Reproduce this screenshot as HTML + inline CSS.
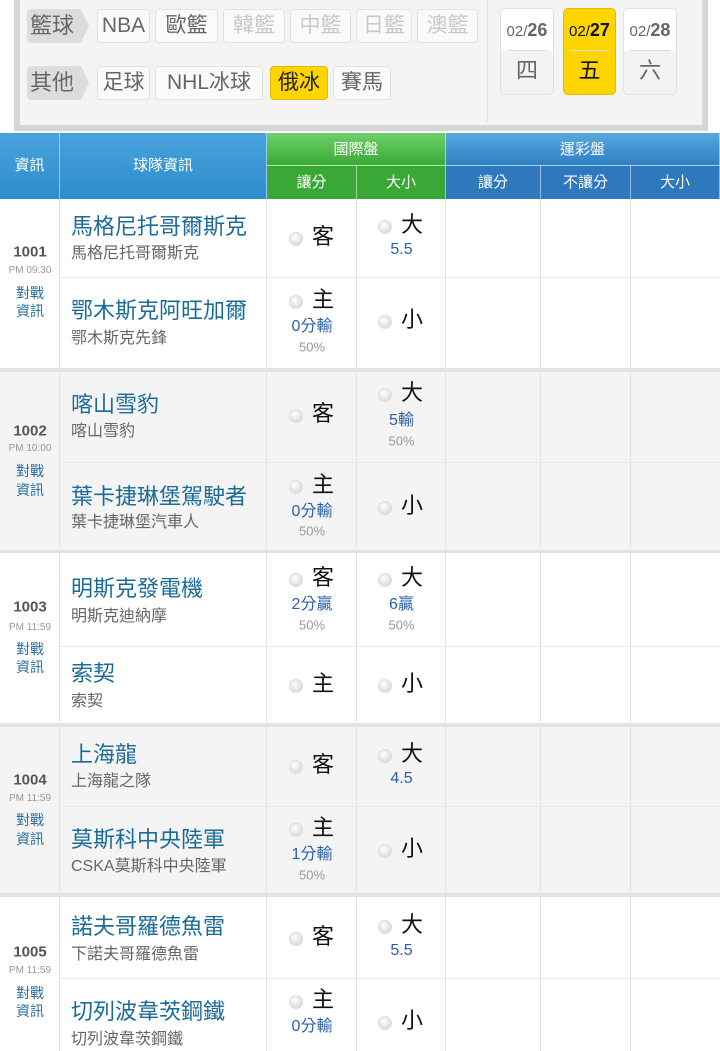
<!DOCTYPE html>
<html><head><meta charset="utf-8"><style>
*{margin:0;padding:0;box-sizing:border-box}
body{width:720px;height:1051px;overflow:hidden;background:#fff;font-family:"Liberation Sans","Noto Sans CJK TC",sans-serif;position:relative}
.abs{position:absolute}
.a{position:absolute;transform:translateY(-50%);line-height:1;white-space:nowrap}
.btn{position:absolute;height:34px;border:1px solid #e2e2e2;border-radius:4px;background:#fafafa;font-size:21px;line-height:32px;text-align:center;color:#666}
.dis{color:#c8c8c8}
.lab{position:absolute;height:34px;background:#dcdcdc;font-size:22px;line-height:34px;color:#666;padding-left:3px;border-radius:4px 0 0 4px}
.lab:after{content:"";position:absolute;right:-8px;top:0;border-left:8px solid #dcdcdc;border-top:17px solid transparent;border-bottom:17px solid transparent}
.date{position:absolute;top:8px;height:87px;border:1px solid #e0e0e0;border-radius:5px;background:#f3f3f3;text-align:center;color:#666;overflow:hidden}
.date .d{font-size:15px;height:42px;line-height:42px;background:#fff;position:relative}
.date .d:after{content:"";position:absolute;left:6px;right:6px;bottom:0;height:1px;background:#ddd}
.date .d b{font-size:18px}
.date .w{font-size:22px;line-height:40px}
.hc{position:absolute;color:#fff;font-size:15px;text-align:center;border-right:1px solid rgba(255,255,255,.5)}
.name{font-size:22px;color:#1b6b99}
.sub{font-size:16px;color:#666}
.r{position:absolute;width:14px;height:14px;border-radius:50%;border:1px solid #ddd;background:radial-gradient(circle at 40% 35%,#fff,#ddd 70%,#ccc);transform:translateY(-50%)}
.o{font-size:22px;color:#111}
.h{font-size:16px;color:#2a5fa8;text-align:center}
.p{font-size:13px;color:#999;text-align:center}
.id{font-size:15px;font-weight:bold;color:#555;width:60px;text-align:center}
.tm{font-size:10px;color:#999;width:60px;text-align:center}
.vs{font-size:14px;color:#2a6fa3;width:60px;text-align:center}
.vl{position:absolute;width:1px;background:#e4e4e4}
.hl{position:absolute;height:1px;background:#eaeaea;left:60px;right:0}
.sep{position:absolute;left:0;right:0;height:4px;background:#e2e2e2}
</style></head><body>
<div class="abs" style="left:14px;top:0;width:694px;height:131px;background:#d6d6d6"></div>
<div class="abs" style="left:20px;top:0;width:682px;height:125px;background:#f4f4f4"></div>
<div class="abs" style="left:487px;top:0;width:1px;height:122px;background:#e0e0e0"></div>
<div class="lab" style="left:27px;top:9px;width:54px">籃球</div>
<div class="btn" style="left:97px;top:9px;width:53px">NBA</div>
<div class="btn" style="left:155px;top:9px;width:63px">歐籃</div>
<div class="btn dis" style="left:223px;top:9px;width:62px">韓籃</div>
<div class="btn dis" style="left:290px;top:9px;width:61px">中籃</div>
<div class="btn dis" style="left:356px;top:9px;width:56px">日籃</div>
<div class="btn dis" style="left:417px;top:9px;width:61px">澳籃</div>
<div class="lab" style="left:27px;top:66px;width:54px">其他</div>
<div class="btn" style="left:97px;top:66px;width:53px">足球</div>
<div class="btn" style="left:155px;top:66px;width:108px">NHL冰球</div>
<div class="btn" style="left:270px;top:66px;width:58px;background:#ffd500;border-color:#e6b800;color:#222">俄冰</div>
<div class="btn" style="left:333px;top:66px;width:58px">賽馬</div>
<div class="date" style="left:500px;width:54px"><div class="d">02/<b>26</b></div><div class="w">四</div></div>
<div class="date" style="left:563px;width:53px;background:#ffd500;border-color:#e6b800;color:#111"><div class="d" style="background:#ffd500">02/<b>27</b></div><div class="w">五</div></div>
<div class="date" style="left:623px;width:54px"><div class="d">02/<b>28</b></div><div class="w">六</div></div>
<div class="abs" style="left:0;top:133px;width:720px;height:66px;background:linear-gradient(#47a3dc,#2f8ccc)"></div>
<div class="hc" style="left:0;top:133px;width:60px;height:66px;line-height:66px">資訊</div>
<div class="hc" style="left:60px;top:133px;width:207px;height:66px;line-height:66px">球隊資訊</div>
<div class="hc" style="left:267px;top:133px;width:179px;height:33px;line-height:33px;background:linear-gradient(#6fd06a,#3aaa36);border-bottom:1px solid rgba(255,255,255,.5)">國際盤</div>
<div class="hc" style="left:267px;top:166px;width:90px;height:33px;line-height:33px;background:#3aa836">讓分</div>
<div class="hc" style="left:357px;top:166px;width:89px;height:33px;line-height:33px;background:#3aa836">大小</div>
<div class="hc" style="left:446px;top:133px;width:274px;height:33px;line-height:33px;background:linear-gradient(#58a8e0,#2f7fc4);border-bottom:1px solid rgba(255,255,255,.5)">運彩盤</div>
<div class="hc" style="left:446px;top:166px;width:95px;height:33px;line-height:33px;background:#2f78be">讓分</div>
<div class="hc" style="left:541px;top:166px;width:90px;height:33px;line-height:33px;background:#2f78be">不讓分</div>
<div class="hc" style="left:631px;top:166px;width:89px;height:33px;line-height:33px;background:#2f78be">大小</div>
<div class="abs" style="left:0;top:372px;width:720px;height:178px;background:#f4f4f4"></div>
<div class="abs" style="left:0;top:727px;width:720px;height:166px;background:#f4f4f4"></div>
<div class="sep" style="top:368px"></div>
<div class="sep" style="top:550px;height:3px"></div>
<div class="sep" style="top:723px"></div>
<div class="sep" style="top:893px"></div>
<div class="hl" style="top:277px"></div>
<div class="hl" style="top:462px"></div>
<div class="hl" style="top:646px"></div>
<div class="hl" style="top:806px"></div>
<div class="hl" style="top:978px"></div>
<div class="vl" style="left:59px;top:199px;height:852px"></div>
<div class="vl" style="left:266px;top:199px;height:852px"></div>
<div class="vl" style="left:356px;top:199px;height:852px"></div>
<div class="vl" style="left:445px;top:199px;height:852px"></div>
<div class="vl" style="left:540px;top:199px;height:852px"></div>
<div class="vl" style="left:630px;top:199px;height:852px"></div>

<div class="a id" style="left:0;top:252px">1001</div><div class="a tm" style="left:0;top:271px">PM 09:30</div>
<div class="a vs" style="left:0;top:293px">對戰</div><div class="a vs" style="left:0;top:311px">資訊</div>
<div class="a name" style="left:71px;top:227px">馬格尼托哥爾斯克</div><div class="a sub" style="left:71px;top:254px">馬格尼托哥爾斯克</div>
<div class="r" style="left:289px;top:239px"></div><div class="a o" style="left:312px;top:237px">客</div>
<div class="r" style="left:378px;top:227px"></div><div class="a o" style="left:401px;top:225px">大</div><div class="a h" style="left:357px;width:89px;top:250px">5.5</div>
<div class="a name" style="left:71px;top:311px">鄂木斯克阿旺加爾</div><div class="a sub" style="left:71px;top:339px">鄂木斯克先鋒</div>
<div class="r" style="left:289px;top:302px"></div><div class="a o" style="left:312px;top:300px">主</div><div class="a h" style="left:267px;width:90px;top:327px">0分輸</div><div class="a p" style="left:267px;width:90px;top:347px">50%</div>
<div class="r" style="left:378px;top:322px"></div><div class="a o" style="left:401px;top:320px">小</div>

<div class="a id" style="left:0;top:431px">1002</div><div class="a tm" style="left:0;top:449px">PM 10:00</div>
<div class="a vs" style="left:0;top:471px">對戰</div><div class="a vs" style="left:0;top:490px">資訊</div>
<div class="a name" style="left:71px;top:405px">喀山雪豹</div><div class="a sub" style="left:71px;top:432px">喀山雪豹</div>
<div class="r" style="left:289px;top:416px"></div><div class="a o" style="left:312px;top:414px">客</div>
<div class="r" style="left:378px;top:395px"></div><div class="a o" style="left:401px;top:393px">大</div><div class="a h" style="left:357px;width:89px;top:421px">5輸</div><div class="a p" style="left:357px;width:89px;top:441px">50%</div>
<div class="a name" style="left:71px;top:497px">葉卡捷琳堡駕駛者</div><div class="a sub" style="left:71px;top:523px">葉卡捷琳堡汽車人</div>
<div class="r" style="left:289px;top:487px"></div><div class="a o" style="left:312px;top:485px">主</div><div class="a h" style="left:267px;width:90px;top:512px">0分輸</div><div class="a p" style="left:267px;width:90px;top:531px">50%</div>
<div class="r" style="left:378px;top:508px"></div><div class="a o" style="left:401px;top:506px">小</div>

<div class="a id" style="left:0;top:607px">1003</div><div class="a tm" style="left:0;top:628px">PM 11:59</div>
<div class="a vs" style="left:0;top:649px">對戰</div><div class="a vs" style="left:0;top:667px">資訊</div>
<div class="a name" style="left:71px;top:589px">明斯克發電機</div><div class="a sub" style="left:71px;top:617px">明斯克迪納摩</div>
<div class="r" style="left:289px;top:580px"></div><div class="a o" style="left:312px;top:578px">客</div><div class="a h" style="left:267px;width:90px;top:605px">2分贏</div><div class="a p" style="left:267px;width:90px;top:625px">50%</div>
<div class="r" style="left:378px;top:580px"></div><div class="a o" style="left:401px;top:578px">大</div><div class="a h" style="left:357px;width:89px;top:605px">6贏</div><div class="a p" style="left:357px;width:89px;top:625px">50%</div>
<div class="a name" style="left:71px;top:674px">索契</div><div class="a sub" style="left:71px;top:702px">索契</div>
<div class="r" style="left:289px;top:686px"></div><div class="a o" style="left:312px;top:684px">主</div>
<div class="r" style="left:378px;top:686px"></div><div class="a o" style="left:401px;top:684px">小</div>

<div class="a id" style="left:0;top:780px">1004</div><div class="a tm" style="left:0;top:799px">PM 11:59</div>
<div class="a vs" style="left:0;top:820px">對戰</div><div class="a vs" style="left:0;top:839px">資訊</div>
<div class="a name" style="left:71px;top:755px">上海龍</div><div class="a sub" style="left:71px;top:782px">上海龍之隊</div>
<div class="r" style="left:289px;top:767px"></div><div class="a o" style="left:312px;top:765px">客</div>
<div class="r" style="left:378px;top:756px"></div><div class="a o" style="left:401px;top:754px">大</div><div class="a h" style="left:357px;width:89px;top:779px">4.5</div>
<div class="a name" style="left:71px;top:840px">莫斯科中央陸軍</div><div class="a sub" style="left:71px;top:867px">CSKA莫斯科中央陸軍</div>
<div class="r" style="left:289px;top:830px"></div><div class="a o" style="left:312px;top:828px">主</div><div class="a h" style="left:267px;width:90px;top:855px">1分輸</div><div class="a p" style="left:267px;width:90px;top:875px">50%</div>
<div class="r" style="left:378px;top:851px"></div><div class="a o" style="left:401px;top:849px">小</div>

<div class="a id" style="left:0;top:952px">1005</div><div class="a tm" style="left:0;top:971px">PM 11:59</div>
<div class="a vs" style="left:0;top:993px">對戰</div><div class="a vs" style="left:0;top:1011px">資訊</div>
<div class="a name" style="left:71px;top:927px">諾夫哥羅德魚雷</div><div class="a sub" style="left:71px;top:955px">下諾夫哥羅德魚雷</div>
<div class="r" style="left:289px;top:939px"></div><div class="a o" style="left:312px;top:937px">客</div>
<div class="r" style="left:378px;top:927px"></div><div class="a o" style="left:401px;top:925px">大</div><div class="a h" style="left:357px;width:89px;top:951px">5.5</div>
<div class="a name" style="left:71px;top:1012px">切列波韋茨鋼鐵</div><div class="a sub" style="left:71px;top:1040px">切列波韋茨鋼鐵</div>
<div class="r" style="left:289px;top:1002px"></div><div class="a o" style="left:312px;top:1000px">主</div><div class="a h" style="left:267px;width:90px;top:1027px">0分輸</div>
<div class="r" style="left:378px;top:1023px"></div><div class="a o" style="left:401px;top:1021px">小</div>
</body></html>
